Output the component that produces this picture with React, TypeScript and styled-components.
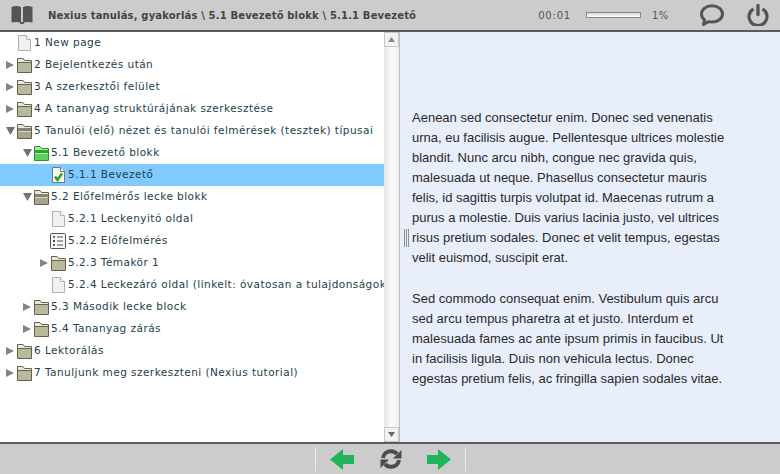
import React from 'react';
import styled, { createGlobalStyle } from 'styled-components';

const GlobalStyle = createGlobalStyle`
  html, body {
    margin: 0;
    padding: 0;
    height: 100%;
    overflow: hidden;
  }
  #root {
    height: 100%;
  }
`;

const Page = styled.div`
  display: flex;
  flex-direction: column;
  width: 780px;
  height: 474px;
  font-family: 'DejaVu Sans', Verdana, sans-serif;
`;

const Header = styled.header`
  display: flex;
  align-items: center;
  height: 30px;
  flex: none;
  background: #cccccc;
  border-bottom: 2px solid #5c5c5c;
`;

const BookWrap = styled.div`
  display: flex;
  width: 22px;
  margin-left: 11px;
  margin-right: 15px;
`;

const Title = styled.div`
  flex: 1;
  font-size: 10px;
  font-weight: bold;
  letter-spacing: 0.16px;
  color: #444444;
  white-space: nowrap;
`;

const Timer = styled.span`
  font-size: 10px;
  letter-spacing: 0.8px;
  color: #555555;
`;

const Progress = styled.div`
  width: 53px;
  height: 4px;
  margin: 0 11px 0 15px;
  border: 1px solid #888888;
  background: linear-gradient(#d8d8d8, #ffffff);
`;

const Percent = styled.span`
  width: 48px;
  font-size: 10px;
  letter-spacing: 0.5px;
  color: #555555;
`;

const HeaderIcon = styled.div<{ $gap: number }>`
  display: flex;
  margin-right: ${p => p.$gap}px;
`;

const Body = styled.main`
  display: flex;
  flex: 1;
  min-height: 0;
`;

const TreePane = styled.div`
  display: flex;
  width: 400px;
  flex: none;
  background: #ffffff;
  border-right: 1px solid #b9bdc6;
  box-sizing: border-box;
`;

const Tree = styled.div`
  flex: 1;
  min-width: 0;
  overflow: hidden;
`;

const Row = styled.div<{ $level: number; $selected?: boolean }>`
  display: flex;
  align-items: center;
  height: 22px;
  padding-left: ${p => 5 + p.$level * 17}px;
  background: ${p => (p.$selected ? '#80caff' : 'transparent')};
  white-space: nowrap;
`;

const ArrowSlot = styled.div`
  display: flex;
  align-items: center;
  width: 10px;
  padding-left: 1px;
  flex: none;
`;

const IconSlot = styled.div`
  display: flex;
  justify-content: center;
  width: 16px;
  flex: none;
  margin-right: 2px;
`;

const Label = styled.span`
  padding-bottom: 2px;
  font-size: 10.5px;
  letter-spacing: 0.46px;
  color: #24404a;
`;

const Scrollbar = styled.div`
  display: flex;
  flex-direction: column;
  width: 15px;
  flex: none;
  background: linear-gradient(90deg, #e6e6e6, #fbfbfb 50%, #f0f0f0);
`;

const ScrollTrack = styled.div`
  flex: 1;
`;

const ScrollButton = styled.div`
  display: flex;
  align-items: center;
  justify-content: center;
  height: 15px;
  box-sizing: border-box;
  background: #f1f1f1;
  border: 1px solid #c8c8c8;
`;

const ReadPane = styled.section`
  position: relative;
  flex: 1;
  box-sizing: border-box;
  padding: 76px 48px 0 12px;
  background: #e9eefb;
  font-family: 'Liberation Sans', Arial, sans-serif;
  font-size: 13px;
  line-height: 20px;
  color: #2a2a2a;
`;

const Paragraph = styled.p`
  margin: 0 0 21px;
`;

const Grip = styled.div`
  position: absolute;
  left: 4px;
  top: 197px;
  width: 5px;
  height: 18px;
  border-left: 1px solid #8f8f8f;
  border-right: 1px solid #8f8f8f;
  box-sizing: border-box;
  &::after {
    content: '';
    display: block;
    width: 1px;
    height: 100%;
    margin-left: 1px;
    background: #8f8f8f;
  }
`;

const Footer = styled.footer`
  display: flex;
  justify-content: center;
  align-items: center;
  height: 30px;
  flex: none;
  background: #cccccc;
  border-top: 2px solid #5c5c5c;
`;

const FooterNav = styled.div`
  display: flex;
  align-items: center;
  justify-content: space-between;
  width: 151px;
  height: 24px;
  margin-left: 1px;
  padding: 0 14px;
  box-sizing: border-box;
  border-left: 1px solid #ececec;
  border-right: 1px solid #ececec;
`;

const Svg = styled.svg`
  display: block;
`;

const ExpandArrow = ({ open }: { open?: boolean }) =>
  open ? (
    <Svg width="9" height="8" viewBox="0 0 9 8">
      <polygon points="0,0 9,0 4.5,8" fill="#6f776c" />
    </Svg>
  ) : (
    <Svg width="8" height="8" viewBox="0 0 8 8">
      <polygon points="0,0 8,4 0,8" fill="#80867c" />
    </Svg>
  );

const FolderIcon = ({ open, active }: { open?: boolean; active?: boolean }) => {
  const edge = active ? '#2f8f2f' : '#62624f';
  const fill = active ? '#5ed05e' : open ? '#a6a68e' : '#b9b99b';
  const upper = active ? '#2fa52f' : '#85856f';
  const top = active ? '#a8eea0' : '#e8e8dc';
  return (
    <Svg width="15" height="15" viewBox="0 0 15 15">
      <path d="M0.5 14.5V0.5H6L7.5 2.5H14.5V14.5Z" fill={top} stroke={edge} />
      {open ? (
        <>
          <rect x="1" y="4" width="13" height="3" fill={upper} />
          <rect x="1" y="7" width="13" height="7" fill={fill} />
          <path d="M1 7.5H14" stroke={active ? '#b8f2b0' : '#d4d4c4'} />
        </>
      ) : (
        <>
          <rect x="1" y="5" width="13" height="9" fill={fill} />
          <path d="M1 4.5H14" stroke={edge} />
        </>
      )}
    </Svg>
  );
};

const PageIcon = () => (
  <Svg width="13" height="16" viewBox="0 0 13 16">
    <path d="M0.5 0.5H8.5L12.5 4.5V15.5H0.5Z" fill="#f1f1f1" stroke="#b0b0b0" />
    <path d="M8.5 0.5V4.5H12.5" fill="#ffffff" stroke="#b0b0b0" />
  </Svg>
);

const CheckedPageIcon = () => (
  <Svg width="13" height="16" viewBox="0 0 13 16">
    <path d="M0.5 0.5H8.5L12.5 4.5V15.5H0.5Z" fill="#f6f6f6" stroke="#777777" />
    <path d="M8.5 0.5V4.5H12.5" fill="#ffffff" stroke="#777777" />
    <path d="M3 9.5L5.5 13L10 6.5" fill="none" stroke="#2f9e1f" strokeWidth="2.4" />
  </Svg>
);

const QuizIcon = () => (
  <Svg width="16" height="16" viewBox="0 0 16 16">
    <rect x="0.5" y="0.5" width="15" height="15" rx="1" fill="#f7f7f7" stroke="#555555" />
    <rect x="3" y="3" width="2" height="2" fill="#b04a3a" />
    <rect x="3" y="7" width="2" height="2" fill="#4a4a4a" />
    <rect x="3" y="11" width="2" height="2" fill="#b04a3a" />
    <path d="M7 4H13M7 8H13M7 12H13" stroke="#555555" />
  </Svg>
);

const BookIcon = () => (
  <Svg width="22" height="18" viewBox="0 0 22 18">
    <path d="M0.5 1C3.5 -0.2 7.5 -0.2 10 1V16.5C7.5 15.7 3.5 15.7 0.5 16.5Z" fill="#555555" />
    <path d="M21.5 1C18.5 -0.2 14.5 -0.2 12 1V16.5C14.5 15.7 18.5 15.7 21.5 16.5Z" fill="#555555" />
    <path d="M8.5 16H13.5L12.5 18H9.5Z" fill="#555555" />
  </Svg>
);

const ChatIcon = () => (
  <Svg width="24" height="22" viewBox="0 0 24 22">
    <path
      d="M3.5 20.5L4.5 15.8C2.6 14.3 1.5 12.4 1.5 10.3C1.5 5.4 6.2 1.7 12 1.7C17.8 1.7 22.5 5.4 22.5 10C22.5 14.6 17.8 18 12 18C10.8 18 9.7 17.9 8.7 17.6Z"
      fill="none"
      stroke="#555555"
      strokeWidth="3"
      strokeLinejoin="round"
    />
  </Svg>
);

const PowerIcon = () => (
  <Svg width="22" height="22" viewBox="0 0 22 22">
    <path d="M6.5 4.8A9 9 0 1 0 15.5 4.8" fill="none" stroke="#555555" strokeWidth="3.2" />
    <path d="M11 1.5V10.5" stroke="#555555" strokeWidth="3.4" strokeLinecap="round" />
  </Svg>
);

const BackArrow = () => (
  <Svg width="24" height="21" viewBox="0 0 24 21">
    <polygon points="0,10.5 13,0 13,6 24,6 24,15 13,15 13,21" fill="#1fb45a" />
  </Svg>
);

const NextArrow = () => (
  <Svg width="24" height="21" viewBox="0 0 24 21">
    <polygon points="24,10.5 11,0 11,6 0,6 0,15 11,15 11,21" fill="#1fb45a" />
  </Svg>
);

const RefreshIcon = () => (
  <Svg width="22" height="20" viewBox="0 0 22 20">
    <path d="M3 9C3.6 5 6.9 2.2 11 2.2C13.5 2.2 15.6 3.2 17 5" fill="none" stroke="#4c4c4c" strokeWidth="4" />
    <polygon points="21.5,1 21.5,9.5 13,9.5" fill="#4c4c4c" />
    <path d="M19 11C18.4 15 15.1 17.8 11 17.8C8.5 17.8 6.4 16.8 5 15" fill="none" stroke="#4c4c4c" strokeWidth="4" />
    <polygon points="0.5,19 0.5,10.5 9,10.5" fill="#4c4c4c" />
  </Svg>
);

const ScrollUp = () => (
  <Svg width="7" height="5" viewBox="0 0 7 5">
    <polygon points="3.5,0 7,5 0,5" fill="#8a8a8a" />
  </Svg>
);

const ScrollDown = () => (
  <Svg width="7" height="5" viewBox="0 0 7 5">
    <polygon points="0,0 7,0 3.5,5" fill="#6a6a6a" />
  </Svg>
);

type Kind = 'page' | 'quiz' | 'checked' | 'folder' | 'folderOpen' | 'folderActive';

interface TreeRow {
  level: number;
  kind: Kind;
  label: string;
  selected?: boolean;
}

const rows: TreeRow[] = [
  { level: 0, kind: 'page', label: '1 New page' },
  { level: 0, kind: 'folder', label: '2 Bejelentkezés után' },
  { level: 0, kind: 'folder', label: '3 A szerkesztői felület' },
  { level: 0, kind: 'folder', label: '4 A tananyag struktúrájának szerkesztése' },
  { level: 0, kind: 'folderOpen', label: '5 Tanulói (elő) nézet és tanulói felmérések (tesztek) típusai' },
  { level: 1, kind: 'folderActive', label: '5.1 Bevezető blokk' },
  { level: 2, kind: 'checked', label: '5.1.1 Bevezető', selected: true },
  { level: 1, kind: 'folderOpen', label: '5.2 Előfelmérős lecke blokk' },
  { level: 2, kind: 'page', label: '5.2.1 Leckenyitó oldal' },
  { level: 2, kind: 'quiz', label: '5.2.2 Előfelmérés' },
  { level: 2, kind: 'folder', label: '5.2.3 Témakör 1' },
  { level: 2, kind: 'page', label: '5.2.4 Leckezáró oldal (linkelt: óvatosan a tulajdonságokkal)' },
  { level: 1, kind: 'folder', label: '5.3 Második lecke block' },
  { level: 1, kind: 'folder', label: '5.4 Tananyag zárás' },
  { level: 0, kind: 'folder', label: '6 Lektorálás' },
  { level: 0, kind: 'folder', label: '7 Tanuljunk meg szerkeszteni (Nexius tutorial)' },
];

const RowIcon = ({ kind }: { kind: Kind }) => {
  if (kind === 'page') return <PageIcon />;
  if (kind === 'quiz') return <QuizIcon />;
  if (kind === 'checked') return <CheckedPageIcon />;
  if (kind === 'folderActive') return <FolderIcon open active />;
  return <FolderIcon open={kind === 'folderOpen'} />;
};

export default function App() {
  return (
    <Page>
      <GlobalStyle />
      <Header>
        <BookWrap>
          <BookIcon />
        </BookWrap>
        <Title>Nexius tanulás, gyakorlás \ 5.1 Bevezető blokk \ 5.1.1 Bevezető</Title>
        <Timer>00:01</Timer>
        <Progress />
        <Percent>1%</Percent>
        <HeaderIcon $gap={23}>
          <ChatIcon />
        </HeaderIcon>
        <HeaderIcon $gap={11}>
          <PowerIcon />
        </HeaderIcon>
      </Header>
      <Body>
        <TreePane>
          <Tree>
            {rows.map(row => (
              <Row key={row.label} $level={row.level} $selected={row.selected}>
                <ArrowSlot>
                  {row.kind.startsWith('folder') && <ExpandArrow open={row.kind !== 'folder'} />}
                </ArrowSlot>
                <IconSlot>
                  <RowIcon kind={row.kind} />
                </IconSlot>
                <Label>{row.label}</Label>
              </Row>
            ))}
          </Tree>
          <Scrollbar>
            <ScrollButton>
              <ScrollUp />
            </ScrollButton>
            <ScrollTrack />
            <ScrollButton>
              <ScrollDown />
            </ScrollButton>
          </Scrollbar>
        </TreePane>
        <ReadPane>
          <Grip />
          <Paragraph>
            Aenean sed consectetur enim. Donec sed venenatis urna, eu facilisis augue. Pellentesque ultrices molestie
            blandit. Nunc arcu nibh, congue nec gravida quis, malesuada ut neque. Phasellus consectetur mauris felis, id
            sagittis turpis volutpat id. Maecenas rutrum a purus a molestie. Duis varius lacinia justo, vel ultrices risus
            pretium sodales. Donec et velit tempus, egestas velit euismod, suscipit erat.
          </Paragraph>
          <Paragraph>
            Sed commodo consequat enim. Vestibulum quis arcu sed arcu tempus pharetra at et justo. Interdum et malesuada
            fames ac ante ipsum primis in faucibus. Ut in facilisis ligula. Duis non vehicula lectus. Donec egestas pretium
            felis, ac fringilla sapien sodales vitae.
          </Paragraph>
        </ReadPane>
      </Body>
      <Footer>
        <FooterNav>
          <BackArrow />
          <RefreshIcon />
          <NextArrow />
        </FooterNav>
      </Footer>
    </Page>
  );
}
